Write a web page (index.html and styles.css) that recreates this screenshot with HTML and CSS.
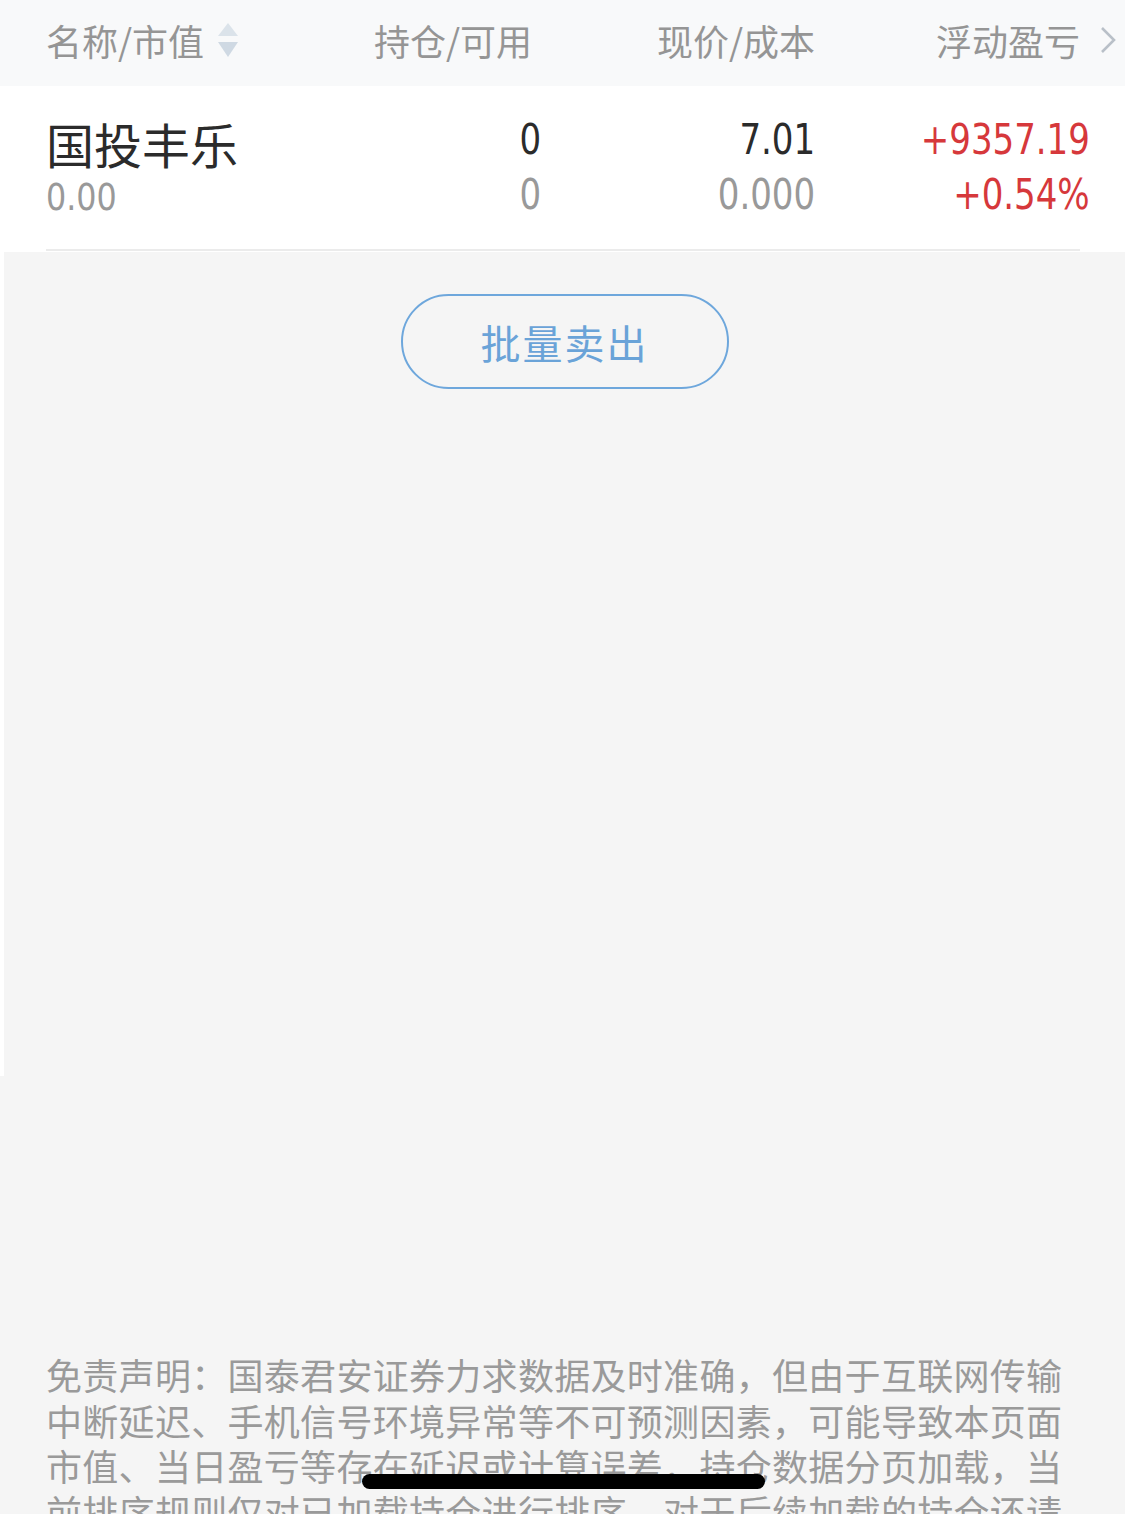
FILE: index.html
```html
<!DOCTYPE html>
<html>
<head>
<meta charset="utf-8">
<title>持仓</title>
<link rel="stylesheet" href="styles.css">
</head>
<body>
<div class="head">
	<div class="h-col h-name">名称/市值
		<svg class="sort" width="20" height="34" viewBox="0 0 20 34">
			<path d="M10 0 L20 13 L0 13 Z" fill="#dbe3ea"/>
			<path d="M10 34 L20 19 L0 19 Z" fill="#cfd9e3"/>
		</svg>
	</div>
	<div class="h-col h-num">持仓/可用</div>
	<div class="h-col h-num">现价/成本</div>
	<div class="h-col h-num h-last">浮动盈亏
		<svg class="more" width="16" height="28" viewBox="0 0 16 28">
			<path d="M2 2 L14 14 L2 26" fill="none" stroke="#b9c0c8" stroke-width="2.6"/>
		</svg>
	</div>
</div>

<div class="row">
	<div class="cell c-name">
		<div class="name">国投丰乐</div>
		<div class="sub"><span class="dig">0.00</span></div>
	</div>
	<div class="cell c-num">
		<div class="top"><span class="dig">0</span></div>
		<div class="bot"><span class="dig">0</span></div>
	</div>
	<div class="cell c-num">
		<div class="top"><span class="dig">7.01</span></div>
		<div class="bot"><span class="dig">0.000</span></div>
	</div>
	<div class="cell c-num">
		<div class="top up"><span class="dig">+9357.19</span></div>
		<div class="bot up"><span class="dig">+0.54%</span></div>
	</div>
</div>
<div class="line"></div>

<div class="list">
	<div class="btn">批量卖出</div>
</div>

<div class="notice">免责声明：国泰君安证券力求数据及时准确，但由于互联网传输中断延迟、手机信号环境异常等不可预测因素，可能导致本页面市值、当日盈亏等存在延迟或计算误差，持仓数据分页加载，当前排序规则仅对已加载持仓进行排序，对于后续加载的持仓还请</div>

<div class="home"></div>
</body>
</html>
```

FILE: styles.css
```css
body
{
margin: 0;
background: #f5f5f5;
font-family: "Noto Sans CJK SC", "Noto Sans", sans-serif;
height: 1514px;
overflow: hidden;
position: relative;
}

.head
{
display: grid;
grid-template-columns: 300px 186px 283px 301px;
padding-left: 46px;
padding-bottom: 6px;
height: 86px;
box-sizing: border-box;
background: #f8f9fa;
align-items: center;
font-size: 36px;
color: #959595;
}

.h-col
{
display: flex;
align-items: center;
}

.h-name .sort
{
margin-left: 14px;
}

.h-num
{
justify-content: flex-end;
}

.h-last .more
{
margin-left: 20px;
}

.row
{
display: grid;
grid-template-columns: 300px 195px 274px 275px;
padding-left: 46px;
height: 163px;
box-sizing: border-box;
padding-top: 26px;
background: #fff;
}

.dig
{
display: inline-block;
font-family: "DejaVu Sans", sans-serif;
font-stretch: condensed;
}

.name
{
font-size: 48px;
line-height: 60px;
margin-top: 1px;
color: #2b2b2b;
}

.sub
{
font-size: 38px;
line-height: 42px;
color: #999;
}

.sub .dig
{
transform: scaleX(0.93);
transform-origin: left center;
}

.c-num
{
text-align: right;
}

.c-num .dig
{
transform: scaleX(0.9);
transform-origin: right center;
}

.c-num .top
{
font-size: 42px;
line-height: 48px;
color: #2b2b2b;
}

.c-num .bot
{
font-size: 42px;
line-height: 54px;
color: #999;
}

.c-num .up
{
color: #d6383b;
}

.line
{
height: 3px;
background: #fff;
}

.line::before
{
content: "";
display: block;
margin: 0 45px 0 46px;
height: 2px;
background: #ebebeb;
}

.list
{
height: 824px;
border-left: 4px solid #fff;
display: flex;
flex-direction: column;
align-items: center;
}

.btn
{
margin-top: 42px;
width: 324px;
height: 91px;
border: 2px solid #6ea7dc;
border-radius: 48px;
display: flex;
align-items: center;
justify-content: center;
font-size: 40px;
letter-spacing: 2px;
color: #6aa3d8;
}

.notice
{
margin-top: 276px;
margin-left: 46px;
width: 1024px;
font-size: 36px;
letter-spacing: 0.3px;
line-height: 45.5px;
color: #9a9a9a;
}

.home
{
position: absolute;
left: 362px;
top: 1474px;
width: 403px;
height: 15px;
border-radius: 8px;
background: #000;
}
```
